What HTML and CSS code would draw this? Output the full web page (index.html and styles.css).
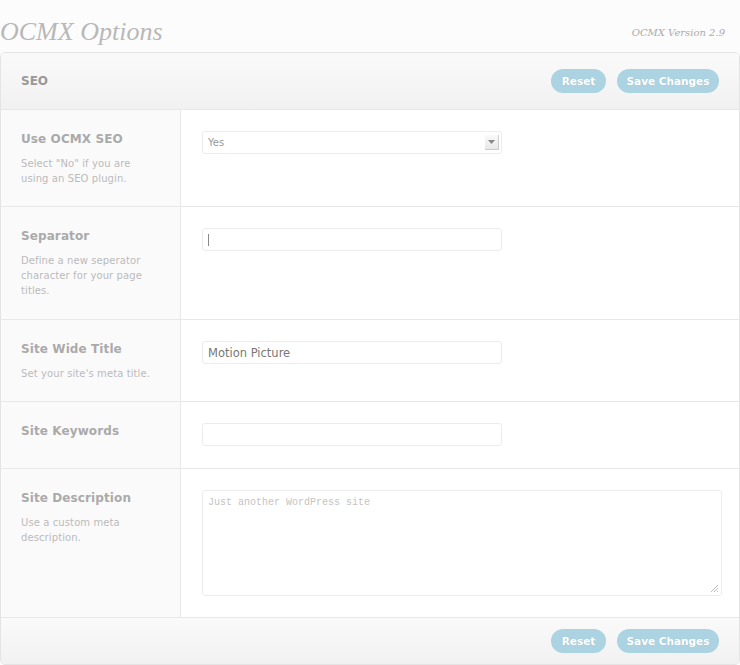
FILE: index.html
```html
<!DOCTYPE html>
<html>
<head>
<meta charset="utf-8">
<link rel="stylesheet" href="styles.css">
</head>
<body>
<div class="top">
  <h1 class="title">OCMX Options</h1>
  <span class="version">OCMX Version 2.9</span>
</div>
<div class="panel">
  <div class="bar head">
    <span class="section">SEO</span>
    <div class="actions">
      <button class="btn reset">Reset</button>
      <button class="btn save">Save Changes</button>
    </div>
  </div>
  <div class="row r1">
    <div class="lbl">
      <div class="name">Use OCMX SEO</div>
      <div class="desc">Select "No" if you are using an SEO plugin.</div>
    </div>
    <div class="field">
      <div class="select"><span>Yes</span><span class="arrow"><svg width="9" height="6" viewBox="0 0 9 6"><path d="M1 1h7L4.5 5z" fill="#888"/></svg></span></div>
    </div>
  </div>
  <div class="row r2">
    <div class="lbl">
      <div class="name">Separator</div>
      <div class="desc">Define a new seperator character for your page titles.</div>
    </div>
    <div class="field">
      <div class="input"><span class="caret"></span></div>
    </div>
  </div>
  <div class="row r3">
    <div class="lbl">
      <div class="name">Site Wide Title</div>
      <div class="desc">Set your site's meta title.</div>
    </div>
    <div class="field">
      <div class="input val">Motion Picture</div>
    </div>
  </div>
  <div class="row r4">
    <div class="lbl">
      <div class="name">Site Keywords</div>
    </div>
    <div class="field">
      <div class="input"></div>
    </div>
  </div>
  <div class="row r5">
    <div class="lbl">
      <div class="name">Site Description</div>
      <div class="desc">Use a custom meta description.</div>
    </div>
    <div class="field">
      <div class="textarea">Just another WordPress site<svg class="grip" width="10" height="10" viewBox="0 0 10 10"><path d="M9 2L2 9M9 5L5 9M9 8L8 9" stroke="#bbb" stroke-width="1"/></svg></div>
    </div>
  </div>
  <div class="bar foot">
    <div class="actions">
      <button class="btn reset">Reset</button>
      <button class="btn save">Save Changes</button>
    </div>
  </div>
</div>
</body>
</html>
```
FILE: styles.css
```css
html, body { margin: 0; padding: 0; }
body {
  background: #fcfcfc;
  font-family: "DejaVu Sans", Verdana, sans-serif;
  width: 740px;
  height: 665px;
  overflow: hidden;
}
.top {
  height: 52px;
  display: flex;
  justify-content: space-between;
  align-items: flex-end;
}
.title {
  margin: 0 0 5px 0;
  font-family: "Liberation Serif", Georgia, serif;
  font-style: italic;
  font-weight: normal;
  font-size: 26px;
  color: #b8b8b8;
}
.version {
  font-family: "DejaVu Serif", Georgia, serif;
  font-style: italic;
  font-size: 10px;
  color: #aaa;
  margin: 0 15px 14px 0;
}
.panel {
  border: 1px solid #e4e4e4;
  border-radius: 5px;
  background: #fff;
  width: 738px;
  overflow: hidden;
}
.bar {
  display: flex;
  align-items: center;
  background: linear-gradient(#fafafa, #f1f1f1);
  padding: 0 20px;
}
.head { height: 56px; justify-content: space-between; border-bottom: 1px solid #e8e8e8; }
.foot { height: 46px; justify-content: flex-end; border-top: 1px solid #e8e8e8; }
.section { font-size: 12px; font-weight: bold; color: #999; }
.actions { display: flex; gap: 11px; }
.btn {
  border: none;
  background: #acd3e2;
  color: #fff;
  font-family: "DejaVu Sans", Verdana, sans-serif;
  font-size: 10.5px;
  font-weight: bold;
  height: 24px;
  border-radius: 12px;
  padding: 0;
  text-shadow: 0 0 1px rgba(0,0,0,0.1);
}
.reset { width: 55px; }
.save { width: 102px; }
.row {
  display: flex;
  border-bottom: 1px solid #e8e8e8;
}
.row.r5 { border-bottom: none; }
.r1 { height: 96px; }
.r2 { height: 112px; }
.r3 { height: 81px; }
.r4 { height: 66px; }
.r5 { height: 148px; }
.lbl {
  background: #fafafa;
  border-right: 1px solid #e8e8e8;
  padding: 22px 0 0 20px;
  box-sizing: border-box;
  flex: 0 0 180px;
}
.name { font-size: 12px; font-weight: bold; color: #aaa; margin-bottom: 10px; letter-spacing: 0.1px; }
.desc { font-size: 10px; color: #bbb; line-height: 15px; width: 130px; letter-spacing: 0.1px; }
.field { padding: 21px 0 0 21px; flex: 1; }
.input, .select {
  width: 300px;
  height: 23px;
  box-sizing: border-box;
  border: 1px solid #ececec;
  border-radius: 3px;
  background: #fff;
  display: flex;
  align-items: center;
  padding: 0 5px;
  font-size: 11px;
  color: #888;
}
.select { justify-content: space-between; padding-right: 2px; color: #999; font-size: 10px; }
.arrow {
  width: 13px; height: 14px;
  display: flex; align-items: center; justify-content: center;
  background: linear-gradient(#fafafa, #e8e8e8);
  border-right: 1px solid #ccc;
  border-bottom: 1px solid #ccc;
}
.caret { width: 1px; height: 12px; background: #888; }
.val { font-size: 11.5px; color: #777; padding-top: 1px; }
.textarea {
  position: relative;
  width: 520px;
  height: 106px;
  box-sizing: border-box;
  border: 1px solid #ececec;
  border-radius: 3px;
  padding: 6px 5px;
  font-family: "Liberation Mono", "Courier New", monospace;
  font-size: 10px;
  color: #c4c4c4;
}
.grip { position: absolute; right: 2px; bottom: 2px; }
```
